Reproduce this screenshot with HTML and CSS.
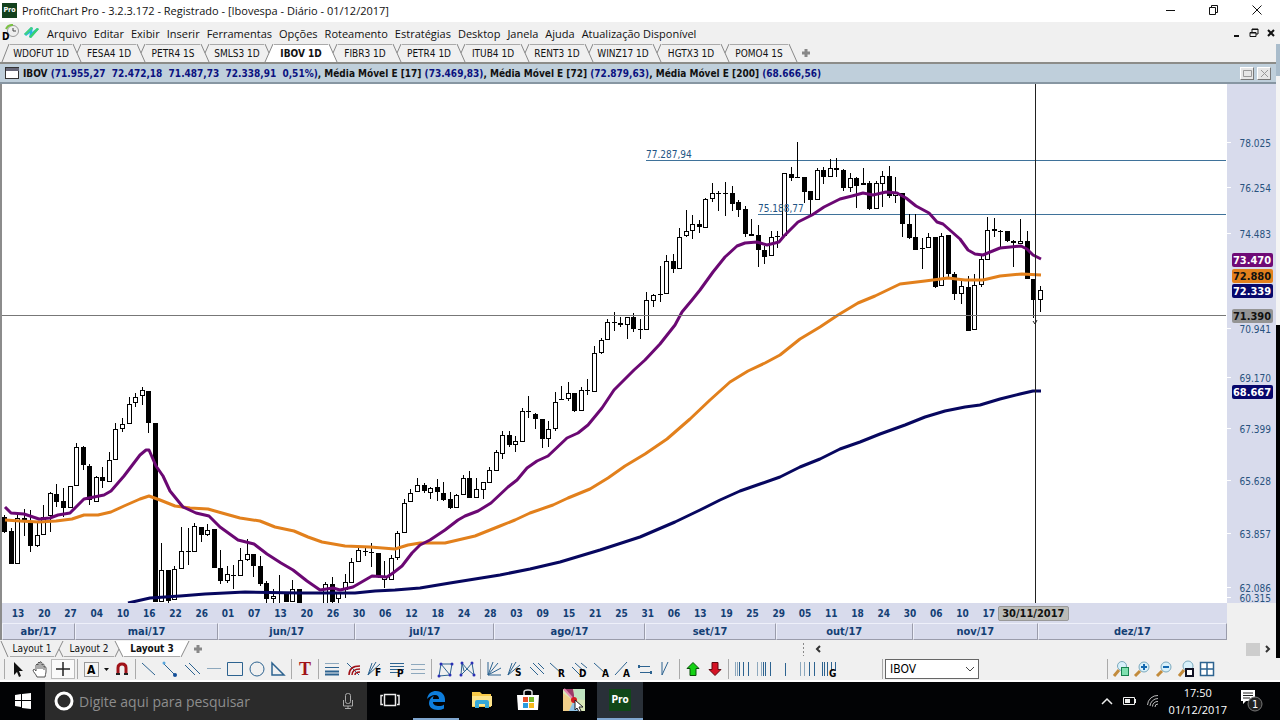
FILE: index.html
```html
<!DOCTYPE html>
<html lang="pt-BR">
<head>
    <meta charset="UTF-8">
    <meta name="viewport" content="width=device-width, initial-scale=1.0">
    <title>ProfitChart Pro</title>
    <link rel="stylesheet" href="styles.css">
</head>
<body>
    <header class="titlebar">
        <span class="app-logo">Pro</span>
        <h1>ProfitChart Pro - 3.2.3.172 - Registrado - [Ibovespa - Diário - 01/12/2017]</h1>
        <div class="window-buttons">
            <button aria-label="Minimizar"><svg width="12" height="12"><path d="M1 6.500h9"/></svg></button>
            <button aria-label="Restaurar"><svg width="12" height="12"><path d="M1.500 3.500h6v7h-6zM3.500 3v-1.500h6v7h-1.500"/></svg></button>
            <button aria-label="Fechar"><svg width="12" height="12"><path d="M1.500 1.500l9 9M10.500 1.500l-9 9"/></svg></button>
        </div>
    </header>

    <main class="workspace">
        <div class="desk">
            <nav class="menubar">
                <svg class="menu-clock" width="18" height="18"><circle cx="11" cy="7" r="5.500" fill="#eee" stroke="#999"/><path d="M4 5a7 7 0 0 1 7-4" fill="none" stroke="#7ac142" stroke-width="2"/><path d="M11 4v3h3" fill="none" stroke="#444"/><text x="0" y="16" class="mark">D</text></svg>
                <svg class="menu-zig" width="17" height="18"><path d="M1 10L8 3l2 1-1 4 5-4 2 1-8 9-2-1 1-4-4 3z" fill="#22b8dc"/><path d="M1 10L8 3l2 1-7 7z" fill="#43d17c"/><path d="M6 13l8-9 2 1-8 9z" fill="#3bd36b"/></svg>
                <a href="#">Arquivo</a><a href="#">Editar</a><a href="#">Exibir</a><a href="#">Inserir</a><a href="#">Ferramentas</a><a href="#">Opções</a><a href="#">Roteamento</a><a href="#">Estratégias</a><a href="#">Desktop</a><a href="#">Janela</a><a href="#">Ajuda</a><a href="#">Atualização Disponível</a>
                <div class="mdi-buttons">
                    <button aria-label="Minimizar gráfico"><svg width="10" height="10"><path d="M2 8h5" stroke-width="2"/></svg></button>
                    <button aria-label="Restaurar gráfico"><svg width="10" height="10"><path d="M1 4.500h6v4h-6zM1 5h6M3 4v-3h6v5h-2M3 1.500h6"/></svg></button>
                    <button aria-label="Fechar gráfico"><svg width="10" height="10"><path d="M2 2l6 6M8 2l-6 6" stroke-width="2"/></svg></button>
                </div>
            </nav>

            <div class="tabs" id="assetTabs">
                <button class="first">WDOFUT 1D</button>
                <button>FESA4 1D</button>
                <button>PETR4 1S</button>
                <button>SMLS3 1D</button>
                <button class="active">IBOV 1D</button>
                <button>FIBR3 1D</button>
                <button>PETR4 1D</button>
                <button>ITUB4 1D</button>
                <button>RENT3 1D</button>
                <button class="wide">WINZ17 1D</button>
                <button class="wide">HGTX3 1D</button>
                <button class="wide">POMO4 1S</button>
                <button class="add" aria-label="Nova aba"><svg width="10" height="10"><path d="M5 1v8M1 5h8"/></svg></button>
            </div>

            <div class="chart-header">
                <svg width="15" height="13"><rect x=".5" y=".5" width="13" height="11" fill="#fff" stroke="#333"/><path d="M1 2.500h13" stroke="#667" stroke-width="3"/></svg>
                <p>IBOV <b>(71.955,27&nbsp; 72.472,18&nbsp; 71.487,73&nbsp; 72.338,91&nbsp; 0,51%)</b>, Média Móvel E [17] <b>(73.469,83)</b>, Média Móvel E [72] <b>(72.879,63)</b>, Média Móvel E [200] <b>(68.666,56)</b></p>
                <button aria-label="Maximizar"><svg width="9" height="9"><path d="M.5 1.500h8v6h-8z"/></svg></button>
                <button aria-label="Fechar"><svg width="9" height="9"><path d="M1 1l7 7M8 1l-7 7"/></svg></button>
            </div>

            <section class="chart">
                <svg class="plot" id="plot" viewBox="2 84 1274 519">
                    <rect x="1227" y="84" width="49" height="519" fill="#d8dbec"/>
                    <g id="ticks"></g>
                    <path class="level" d="M646 160.500H1226M758 214.500H1226"/>
                    <g id="candles"></g>
                    <text class="level-text" x="646" y="158">77.287,94</text>
                    <text class="level-text" x="758" y="212">75.188,77</text>
                    <polyline class="ma200" points="128,603 150,598 180,596 205,594 245,592 300,593 355,593 375,591 395,590 420,588 450,583 500,575 530,569 560,562 600,550 640,537 675,522 700,510 720,500 740,491 760,484 780,477 800,467 820,459 840,449 860,442 880,434 905,425 925,417 945,411 965,407 980,405 1000,399 1020,394 1033,391 1041,391"/>
                    <polyline class="ma72" points="5,520 20,521 39,522 56,521 72,519 84,515 98,515 111,512 124,506 140,499 149,496 160,500 175,506 190,508 208,509 222,513 240,518 260,521 275,527 294,531 308,537 322,542 345,546 370,547 395,549 408,545 420,543 445,543 475,536 500,526 515,520 530,513 553,505 568,498 590,489 608,478 625,466 645,454 667,439 690,419 710,400 730,382 748,371 765,363 780,355 800,339 820,327 838,315 858,303 875,296 900,284 925,281 948,278 965,280 983,280 1000,276 1022,274 1041,275"/>
                    <polyline class="ma17" points="5,507 11,513 24,514 39,519 50,518 58,515 70,513 84,499 104,495 111,491 124,476 140,455 146,450 149,450 156,466 163,476 170,491 183,507 196,513 209,516 220,527 238,540 254,544 267,554 281,563 293,570 307,581 320,590 333,588 340,590 353,587 372,576 387,577 393,573 402,566 412,553 420,545 430,540 445,530 458,520 465,516 478,511 491,503 508,487 517,480 527,468 537,461 548,456 567,438 578,433 588,425 602,408 614,390 634,370 645,360 660,344 675,325 682,312 692,300 700,290 713,272 725,257 737,246 745,243 757,242 767,245 779,242 784,236 798,222 812,215 824,207 840,199 852,196 863,193 873,195 886,192 897,193 906,198 916,206 929,213 937,222 943,224 960,239 968,250 975,254 983,255 1000,248 1021,246 1027,249 1033,255 1041,259"/>
                    <path class="cross" d="M2 315.500H1226"/>
                    <path class="cross-v" d="M1035.500 84V603"/>
                    <g id="prices"></g>
                    <path d="M1033 321l2 3 2-4" fill="none" stroke="#222"/>
                </svg>
            </section>

            <div class="axis">
                <div class="axis-days">
                    <div class="days" id="days"></div>
                    <span class="day-tag">30/11/2017</span>
                    <span class="days-rest"></span>
                </div>
                <div class="months">
                    <span>abr/17</span><span>mai/17</span><span>jun/17</span><span>jul/17</span><span>ago/17</span><span>set/17</span><span>out/17</span><span>nov/17</span><span>dez/17</span>
                </div>
            </div>
        </div>
        <div class="side"></div>
    </main>

    <div class="layouts">
        <div class="tabs flipped" id="layoutTabs">
            <button class="first">Layout 1</button>
            <button>Layout 2</button>
            <button class="active">Layout 3</button>
            <button class="add" aria-label="Novo layout"><svg width="10" height="10"><path d="M5 1v8M1 5h8"/></svg></button>
        </div>
        <div class="scroller">
            <svg width="24" height="14"><path d="M3.500 1v13" stroke="#888" stroke-dasharray="2 2"/><path d="M20 4l-3 3 3 3" fill="none" stroke="#333" stroke-width="2"/></svg>
            <span class="thumb"></span>
            <svg width="16" height="14"><path d="M6 4l3 3-3 3" fill="none" stroke="#333" stroke-width="2"/></svg>
        </div>
    </div>

    <div class="toolbar">
        <div class="group">
            <button aria-label="Cursor"><svg viewBox="0 0 18 18"><path d="M5 2v13l3-3 2 5 2-1-2-5h4z" fill="#111"/></svg></button>
            <button aria-label="Mover"><svg viewBox="0 0 18 18"><path d="M6 17C5 14 2 12 2 10q1-2 3 1V5q1-2 2 0V3q1-2 2 0v-1q1-1 2 1v2q2-2 2 0v2q2-1 2 1v4c0 2-1 3-1 5zM7 4v5M9 3v6M11 4v5M13 6v4" fill="#fff" stroke="#555"/></svg></button>
            <button class="pressed" aria-label="Cruz"><svg viewBox="0 0 18 18"><path d="M9 2v14M2 9h14" stroke="#222" stroke-width="1.500"/></svg></button>
        </div>
        <div class="group">
            <button aria-label="Texto"><svg viewBox="0 0 18 18"><rect x="2.500" y="2.500" width="14" height="14" fill="#f4f4f4" stroke="#999"/><text x="5" y="14" class="mark big">A</text></svg></button>
            <button class="narrow" aria-label="Opções de texto"><svg viewBox="0 0 9 18"><path d="M2 8h5l-2.500 3z" fill="#111"/></svg></button>
            <button aria-label="Ímã"><svg viewBox="0 0 18 18"><path d="M5 15V8q0-4 4-4t4 4v7" fill="none" stroke="#a01218" stroke-width="3"/><path d="M3 14h4M11 14h4" stroke="#222" stroke-width="2"/></svg></button>
        </div>
        <div class="group">
            <button aria-label="Reta"><svg viewBox="0 0 18 18"><path class="b" d="M2 3l13 12"/></svg></button>
            <button aria-label="Segmento"><svg viewBox="0 0 18 18"><path class="b" d="M2 3l12 12"/><circle cx="3" cy="3" r="1.500" fill="#58a6dd"/><circle cx="14" cy="15" r="2" fill="#124e99"/></svg></button>
            <button aria-label="Canal"><svg viewBox="0 0 18 18"><path class="b" d="M2 5l10 10M6 3l11 11"/></svg></button>
            <button aria-label="Linha horizontal"><svg viewBox="0 0 18 18"><path class="b soft" d="M2 8.500h14"/></svg></button>
            <button aria-label="Retângulo"><svg viewBox="0 0 18 18"><path class="b" d="M1.500 2.500h15v13h-15z"/></svg></button>
            <button aria-label="Círculo"><svg viewBox="0 0 18 18"><circle class="b" cx="9" cy="9" r="7"/></svg></button>
            <button aria-label="Triângulo"><svg viewBox="0 0 18 18"><path class="b" d="M3 3v12h12z" stroke-width="1.500"/></svg></button>
        </div>
        <div class="group">
            <button aria-label="Nota"><svg viewBox="0 0 18 18"><text x="3" y="15" class="serif-t">T</text></svg></button>
        </div>
        <div class="group">
            <button aria-label="Retrações"><svg viewBox="0 0 18 18"><path class="b soft" d="M2 3.500h14"/><path class="b" d="M2 7.500h14"/><path class="b" d="M2 11.500h14M2 14.500h14" stroke-width="2"/></svg></button>
            <button aria-label="Arcos"><svg viewBox="0 0 18 18"><path class="b" d="M3 3l12 12"/><path d="M5 15q0-9 11-9M8 15q0-6 8-6M11 15q0-3 5-3" fill="none" stroke="#a01218" stroke-width="1.500"/></svg></button>
            <button aria-label="Leque Fibonacci"><svg viewBox="0 0 18 18"><path class="b" d="M2 15L14 4M2 15L10 2M2 15L6 3"/><text x="9" y="16" class="mark">F</text></svg></button>
            <button aria-label="Projeção"><svg viewBox="0 0 18 18"><path class="b" d="M2 3.500h14M2 6.500h14M2 9.500h14M2 12.500h8"/><text x="9" y="17" class="mark">P</text></svg></button>
            <button aria-label="Extensões"><svg viewBox="0 0 18 18"><path class="b soft" d="M2 4.500h14M2 9.500h14M2 13.500h14"/></svg></button>
        </div>
        <div class="group">
            <button aria-label="Padrão"><svg viewBox="0 0 18 18"><path class="b" d="M3 16L5 4h11l-2 11zM5 4l9 11"/><path class="dots" d="M3 16h0M5 4h0M16 4h0M14 15h0"/></svg></button>
            <button aria-label="Borboleta"><svg viewBox="0 0 18 18"><path class="b" d="M3 15L4 3l5 6 5-6 2 12-7-6zM4 3l2 8"/><path class="dots" d="M3 15h0M4 3h0M14 3h0M16 15h0"/></svg></button>
        </div>
        <div class="group">
            <button aria-label="Leque"><svg viewBox="0 0 18 18"><path class="b" d="M3 2v13h13M3 15L8 2M3 15l10-12M3 15l13-7"/></svg></button>
            <button aria-label="Leque de velocidade"><svg viewBox="0 0 18 18"><path class="b" d="M2 15L14 5M2 15L10 2M2 15L6 3"/><text x="9" y="16" class="mark">S</text></svg></button>
            <button aria-label="Paralelas"><svg viewBox="0 0 18 18"><path class="b" d="M2 7l8 8M5 3l11 11M10 3l6 6"/></svg></button>
            <button aria-label="Regressão"><svg viewBox="0 0 18 18"><path class="b" d="M1 3l11 10"/><text x="9" y="17" class="mark">R</text></svg></button>
            <button aria-label="Desvio"><svg viewBox="0 0 18 18"><path class="b" d="M1 7l8 8M4 3l10 9M10 3l6 5"/><text x="8" y="17" class="mark">D</text></svg></button>
            <button aria-label="Reta A"><svg viewBox="0 0 18 18"><path class="b" d="M1 3l11 10"/><text x="9" y="17" class="mark">A</text></svg></button>
            <button aria-label="Reta B"><svg viewBox="0 0 18 18"><path class="b" d="M1 15L13 2"/><text x="9" y="17" class="mark">A</text></svg></button>
            <button aria-label="Ciclo"><svg viewBox="0 0 18 18"><path class="b" d="M2 6.500h12M4 12.500h12"/><path class="b" d="M3 5v3M15 11v3" stroke-width="2"/></svg></button>
            <button aria-label="Pernada"><svg viewBox="0 0 18 18"><path class="b" d="M5 2v13L11 2"/></svg></button>
        </div>
        <div class="group">
            <button aria-label="Compra"><svg viewBox="0 0 18 18"><path d="M9 2.500l6 6h-3v7H6v-7H3z" fill="#14d214" stroke="#084f08"/></svg></button>
            <button aria-label="Venda"><svg viewBox="0 0 18 18"><path d="M9 15.500l6-6h-3v-7H6v7H3z" fill="#d51224" stroke="#5d0810"/></svg></button>
        </div>
        <div class="group">
            <button aria-label="Ciclos 1"><svg viewBox="0 0 18 18"><path class="b soft" d="M2.500 2v14M4.500 2v14"/><path class="b" d="M6.500 2v14M10.500 2v14M15.500 2v14"/></svg></button>
            <button aria-label="Ciclos 2"><svg viewBox="0 0 18 18"><path class="b soft" d="M2.500 2v14M6.500 2v14"/><path class="b" d="M8.500 2v14M10.500 2v14M15.500 2v14"/></svg></button>
            <button aria-label="Linha vertical"><svg viewBox="0 0 18 18"><path class="b" d="M9.500 3v13"/></svg></button>
            <button aria-label="Ciclos 3"><svg viewBox="0 0 18 18"><path class="b soft" d="M2.500 2v14M6.500 2v14"/><path class="b" d="M11.500 2v14M16.500 2v14"/></svg></button>
            <button aria-label="Ciclos Gann"><svg viewBox="0 0 18 18"><path class="b" d="M2.500 2v14M4.500 2v14M7.500 2v14M11.500 2v9M15.500 2v9"/><text x="9" y="17" class="mark">G</text></svg></button>
        </div>
        <div class="group symbol">
            <select aria-label="Ativo"><option>IBOV</option></select>
            <svg class="chevron" viewBox="0 0 10 18"><path d="M1 7l4 4 4-4" fill="none" stroke="#444"/></svg>
        </div>
        <div class="group zooms">
            <button aria-label="Zoom área"><svg viewBox="0 0 18 18"><circle class="lens" cx="10" cy="6" r="4.500"/><path class="handle" d="M7 10l-5 6"/><rect x="9.500" y="7.500" width="7" height="8" fill="#7fe0b0" stroke="#17814e"/></svg></button>
            <button aria-label="Aumentar zoom"><svg viewBox="0 0 18 18"><circle class="lens" cx="11" cy="7" r="5"/><path class="handle" d="M7 11l-5 5"/><path d="M8 7h6M11 4v6" stroke="#1368b0" stroke-width="2"/></svg></button>
            <button aria-label="Diminuir zoom"><svg viewBox="0 0 18 18"><circle class="lens" cx="11" cy="7" r="5"/><path class="handle" d="M7 11l-5 5"/><path d="M8 7h6" stroke="#1368b0" stroke-width="2"/></svg></button>
            <button aria-label="Zoom original"><svg viewBox="0 0 18 18"><circle class="lens" cx="11" cy="6" r="5"/><path class="handle" d="M7 10l-5 6"/><rect x="9" y="9" width="7" height="7" fill="#fff" stroke="#112" stroke-width="2"/></svg></button>
            <button aria-label="Organizar janelas"><svg viewBox="0 0 18 18"><path d="M2.500 2.500h13v13h-13zM9 2v13M2 9h13" fill="#fff" stroke="#2d6390" stroke-width="1.500"/></svg></button>
        </div>
    </div>

    <footer class="taskbar">
        <button class="start" aria-label="Iniciar"><svg width="16" height="16"><path d="M0 2l6-1v6H0zM7 1l9-1v7H7zM0 8h6v6l-6-1zM7 8h9v8l-9-1z" fill="#fff"/></svg></button>
        <label class="search">
            <svg width="20" height="20"><circle cx="10" cy="10" r="8" fill="none" stroke="#fff" stroke-width="3"/></svg>
            <input type="text" placeholder="Digite aqui para pesquisar">
            <svg width="12" height="18"><rect x="3.500" y="1.500" width="5" height="10" rx="2" fill="none" stroke="#aaa"/><path d="M1.500 8v6h9V8M6 14v3M3 16.500h6" fill="none" stroke="#aaa"/></svg>
        </label>
        <button class="app" aria-label="Visão de tarefas"><svg width="20" height="16"><path d="M4.500 2.500h11v11h-11zM3 3.500H1v9h2M17 3.500h2v9h-2" fill="none" stroke="#eee" stroke-width="1.500"/></svg></button>
        <button class="app edge" aria-label="Edge"><svg width="20" height="20" viewBox="0 0 20 20"><path d="M1 9C2 3 6 1 10 1c6 0 9 4 9 9v2H7c0 3 3 4 6 4 2 0 4-.5 5-1.500v4c-2 1-4 1.500-6 1.500-6 0-9-3-9-7 0-3 2-6 5-7-1 1-1 2-1 3h6c0-2-1-4-4-4-3 0-6 2-8 4z" fill="#0d7ddc"/></svg></button>
        <button class="app" aria-label="Explorador"><svg width="20" height="20"><path d="M0 2h8l2 2h9v13H0z" fill="#f7c948"/><path d="M0 6h20v10H0z" fill="#fde48c"/><path d="M3 18v-6q0-2 2-2h10q2 0 2 2v6h-4v-4H7v4z" fill="#37a9d8"/></svg></button>
        <button class="app" aria-label="Loja"><svg width="22" height="22"><path d="M7 6V3q0-2 4-2t4 2v3" fill="none" stroke="#ddd" stroke-width="1.500"/><path d="M0 6h22l-1 15H1z" fill="#fff"/><path d="M6 8h5v5H6z" fill="#e8502b"/><path d="M12 8h5v5h-5z" fill="#76b82a"/><path d="M6 14h5v5H6z" fill="#2a9be0"/><path d="M12 14h5v5h-5z" fill="#f5b81c"/></svg></button>
        <button class="app" aria-label="Gravador"><svg width="24" height="24"><path d="M1 1h22v22H1z" fill="#d9e8b8"/><path d="M1 1h10l2 12z" fill="#9c3b68"/><path d="M12 1h11v11l-11-1z" fill="#bfe3c0"/><path d="M1 5l11 8-5 10H1z" fill="#f0ce8a"/><path d="M12 12l-5 11h11z" fill="#8fc3e6"/><path d="M2 1l10 11" stroke="#e48ab0" stroke-width="2"/><circle cx="12" cy="12" r="3" fill="#d41a1f"/><path d="M13 12v10l2-2 2 4 2-1-2-4h4z" fill="#fff" stroke="#222"/></svg></button>
        <button class="app running" aria-label="ProfitChart Pro"><span class="pro-tile">Pro</span></button>
        <div class="tray">
            <svg width="14" height="18"><path d="M2 12l5-5 5 5" fill="none" stroke="#eee" stroke-width="1.500"/></svg>
            <svg width="14" height="18"><path d="M.5 5.500h11v7H.5zM12.500 7v4" fill="none" stroke="#eee"/><path d="M2 7h5v4H2z" fill="#eee"/></svg>
            <svg width="14" height="18"><path d="M1.500 13A10 10 0 0 1 12 3.500M4 14A8 8 0 0 1 12 6.500M6.500 14.500A5 5 0 0 1 12 9.500M9 15A3 3 0 0 1 12 12" fill="none" stroke="#bbb"/></svg>
            <time>17:50<br>01/12/2017</time>
            <svg class="notice" width="24" height="26"><path d="M1 2h14v11H6l-3 3v-3H1z" fill="#fff"/><path d="M3 5h10M3 7.500h10M3 10h7" stroke="#222"/><circle cx="15" cy="16" r="7" fill="#222" stroke="#777"/><text x="12" y="20">1</text></svg>
        </div>
    </footer>

    <script src="chart.js"></script>
</body>
</html>
```
FILE: styles.css
```css
:root {
    --face: #f0f0f0;
    --axis: #d8dbec;
    --axis-text: #143f74;
    --header: #bfcfdb;
    --ui: "DejaVu Sans Condensed", "DejaVu Sans", sans-serif;
}

* {
    margin: 0;
    padding: 0;
    box-sizing: border-box;
}

body {
    min-height: 100vh;
    display: flex;
    flex-direction: column;
    overflow: hidden;
    background: var(--face);
    font-family: "Open Sans", "Noto Sans", sans-serif;
    font-size: 12px;
    color: #111;
}

button {
    border: none;
    background: none;
    font: inherit;
    color: inherit;
}

svg {
    display: block;
    flex: none;
}

.titlebar {
    height: 22px;
    display: flex;
    align-items: center;
    background: #fff;
    padding: 0 17px 2px 2px;
}

.app-logo {
    width: 15px;
    height: 15px;
    background: #12401c;
    color: #fff;
    font: bold 7px/15px var(--ui);
    text-align: center;
}

.titlebar h1 {
    margin-left: 5px;
    font-size: 11px;
    font-weight: 400;
}

.window-buttons {
    margin-left: auto;
    display: flex;
    gap: 31px;
}

.window-buttons path,
.mdi-buttons path {
    fill: none;
    stroke: #111;
}

.workspace {
    display: flex;
}

.desk {
    flex: 1;
    min-width: 0;
}

/* strip of the window lying behind */
.side {
    width: 4px;
    background: linear-gradient(var(--face) 22px, #a9bccb 22px 54px, #f4f4f4 54px 303px, #000 303px);
}

.menubar {
    height: 22px;
    display: flex;
    align-items: center;
    padding-left: 2px;
}

.menubar a {
    margin-right: 7px;
    color: #111;
    text-decoration: none;
    font-size: 11px;
}

.menu-zig {
    margin: 0 7px 0 3px;
}

.mdi-buttons {
    margin-left: auto;
    display: flex;
    gap: 7px;
}

.mark {
    font: bold 10px var(--ui);
    fill: #000;
}

.mark.big {
    font-size: 12px;
}

.tabs {
    display: flex;
    height: 18px;
    font: 10px/17px var(--ui);
}

.tabs button {
    width: 54px;
    text-align: center;
    white-space: nowrap;
    border-top: 1px solid #aaa;
}

.tabs button.first {
    width: 62px;
}

.tabs button.wide {
    width: 58px;
}

.tabs .active {
    background: #fff;
    font-weight: bold;
}

.slant {
    width: 10px;
    height: 100%;
    fill: none;
    stroke: #888;
}

.slant .paper {
    fill: #fff;
    stroke: none;
}

.tabs button.add {
    width: 16px;
    border: none;
    display: flex;
    align-items: center;
    justify-content: center;
}

.tabs .add path {
    stroke: #888;
    stroke-width: 3;
}

.chart-header {
    height: 22px;
    display: flex;
    align-items: center;
    gap: 3px;
    padding: 0 5px;
    background: var(--header);
    border-top: 2px solid #8c8c88;
    border-bottom: 2px solid #8796a2;
    font: bold 10px var(--ui);
}

.chart-header p {
    flex: 1;
    white-space: nowrap;
}

.chart-header b {
    color: #0b1280;
}

.chart-header button {
    width: 14px;
    height: 13px;
    display: grid;
    place-items: center;
    background: #e6e6e6;
    border: 1px solid #fff;
    border-right-color: #777;
    border-bottom-color: #777;
}

.chart-header button path {
    fill: none;
    stroke: #999;
}

.chart {
    background: #fff;
    border-left: 2px solid #8c8c8c;
}

.plot {
    width: 100%;
}

.level {
    stroke: #3f729a;
}

.level-text {
    font: 10px var(--ui);
    fill: #235584;
}

.plot polyline {
    fill: none;
    stroke-width: 3;
    stroke-linejoin: round;
}

.plot .ma17 {
    stroke: #6b0873;
}

.plot .ma72 {
    stroke: #e2801c;
}

.plot .ma200 {
    stroke: #07075f;
}

.cross {
    stroke: #777;
}

.cross-v {
    stroke: #222;
}

#candles {
    shape-rendering: crispEdges;
    stroke: #000;
}

.up {
    fill: #fff;
}

.down {
    fill: #000;
}

.price {
    font: 10px var(--ui);
    fill: #28527e;
    text-anchor: end;
}

.price-tag {
    font: bold 11px var(--ui);
    text-anchor: middle;
}

.axis {
    margin-right: 49px;
    background: var(--axis);
    border-left: 2px solid #8c8c8c;
    color: var(--axis-text);
    font: bold 10px var(--ui);
}

.axis-days {
    display: flex;
    align-items: center;
    height: 20px;
    padding-left: 3px;
}

.days {
    flex: 996;
    display: grid;
    grid-template-columns: repeat(38, 1fr);
    text-align: center;
}

.day-tag {
    width: 71px;
    margin-left: -4px;
    text-align: center;
    color: #111;
    background: #bcbcb8;
    border: 1px solid #999;
    border-radius: 2px;
    font-size: 11px;
    line-height: 13px;
}

.days-rest {
    flex: 158;
}

.months {
    display: grid;
    grid-template-columns: 73fr 143fr 137fr 139fr 150fr 131fr 137fr 125fr 189fr;
    text-align: center;
    font-size: 11px;
    line-height: 15px;
}

.months span {
    border: 1px solid #eef0fa;
    border-right-color: #9a9cab;
    border-bottom-color: #9a9cab;
}

.layouts {
    height: 18px;
    display: flex;
    justify-content: space-between;
    align-items: center;
    border-right: 4px solid #000;
}

.tabs.flipped {
    height: 16px;
    line-height: 14px;
}

.tabs.flipped button {
    width: 50px;
    border-top: none;
    border-bottom: 1px solid #aaa;
}

.tabs.flipped button.first {
    width: 44px;
}

.tabs.flipped button.active {
    width: 56px;
}

.tabs.flipped button.add {
    width: 16px;
    border: none;
}

.scroller {
    display: flex;
    align-items: center;
    flex: 0 0 476px;
}

.thumb {
    width: 14px;
    height: 13px;
    margin-left: auto;
    background: #cdcdcd;
}

.toolbar {
    height: 24px;
    display: grid;
    grid-template-columns: 73px 58px 156px 27px 113px 49px 199px 49px 114px 1fr 225px 173px;
    align-items: center;
    padding-left: 4px;
    border-bottom: 2px solid #fff;
}

.group {
    display: flex;
    height: 20px;
    padding: 0 2px;
    border-left: 1px solid #aaa;
}

.group button {
    flex: 1;
    display: grid;
    place-items: center;
}

.group button.narrow {
    flex: 0 0 10px;
}

.group svg {
    height: 18px;
    overflow: visible;
}

.group .pressed {
    background: #fafafa;
    border: 1px solid #bbb;
}

.group .b {
    fill: none;
    stroke: #2d6390;
}

.group .soft {
    stroke: #8da8bd;
}

.dots {
    stroke: #2a2fb5;
    stroke-width: 3;
    stroke-linecap: round;
}

.serif-t {
    font: bold 18px "Liberation Serif", serif;
    fill: #a01218;
}

.symbol {
    grid-column: 11;
    align-items: center;
}

.symbol select {
    appearance: none;
    width: 94px;
    height: 20px;
    border: 1px solid #666;
    background: #fff;
    font: 12px var(--ui);
    padding-left: 4px;
}

.symbol .chevron {
    width: 10px;
    margin-left: -14px;
    pointer-events: none;
}

.zooms {
    width: 113px;
}

.lens {
    fill: #d8f0fa;
    stroke: #7ba9bd;
}

.handle {
    stroke: #c28b3c;
    stroke-width: 3;
}

.taskbar {
    flex: 1;
    min-height: 38px;
    display: flex;
    align-items: stretch;
    background: #020305;
    color: #fff;
}

.taskbar button {
    display: grid;
    place-items: center;
}

.start {
    width: 45px;
}

.search {
    width: 322px;
    display: flex;
    align-items: center;
    gap: 5px;
    padding: 0 13px 0 9px;
    background: #2b2b2b;
}

.search input {
    flex: 1;
    min-width: 0;
    border: none;
    background: none;
    color: #fff;
    font: 14px "Open Sans", sans-serif;
}

.search input::placeholder {
    color: #8d8d8d;
}

.app {
    width: 46px;
    border-bottom: 2px solid transparent;
}

.app.edge,
.app.running {
    border-color: #7fa6cf;
}

.app.running {
    background: #293038;
}

.pro-tile {
    width: 22px;
    height: 22px;
    background: #104718;
    font: bold 10px/22px var(--ui);
}

.tray {
    margin-left: auto;
    display: flex;
    align-items: center;
    gap: 9px;
    padding-right: 16px;
}

.tray time {
    font-size: 11px;
    line-height: 17px;
    text-align: center;
}

.notice {
    margin-left: 4px;
}

.notice text {
    font: 11px var(--ui);
    fill: #fff;
}
```
FILE: chart.js
```javascript
// one row per session: high, body top, body bottom, low, 1 = closed lower
const sessions = [
    [515,517,531,533,1],[528,531,563,563,1],[513,518,563,563,0],[509,518,519,536,1],[510,523,545,552,1],
    [523,535,545,547,0],[505,517,534,534,0],[492,493,515,532,0],[484,494,501,507,1],[488,501,507,517,1],
    [486,486,507,507,0],[443,447,485,485,0],[446,447,464,470,1],[464,466,499,505,1],[476,477,501,501,0],
    [467,477,480,488,1],[452,460,481,481,0],[423,429,459,459,0],[418,424,428,432,0],[397,404,423,423,0],
    [393,397,402,407,0],[387,390,395,405,0],[391,391,422,433,1],[423,423,601,601,1],[543,570,601,601,0],
    [570,570,600,603,1],[566,569,599,599,0],[527,551,568,568,0],[528,551,551,565,1],[523,526,551,551,0],
    [527,527,534,542,1],[524,530,534,536,0],[529,529,567,567,1],[550,568,580,584,1],[566,574,580,583,0],
    [565,575,575,589,1],[548,560,575,575,0],[539,554,559,561,0],[554,554,565,577,1],[556,566,583,586,1],
    [581,583,598,603,1],[589,596,598,603,0],[575,593,593,603,1],[593,593,601,601,1],[580,589,601,601,0],
    [589,589,603,603,1],null,null,null,[582,584,603,603,0],
    [577,584,601,603,1],[593,593,598,603,0],[574,582,589,598,0],[558,562,582,582,0],[548,550,561,561,0],
    [547,551,551,556,1],[543,552,552,567,1],[553,553,575,578,1],[561,577,579,588,0],[555,558,579,579,0],
    [531,533,557,560,0],[499,503,532,532,0],[489,493,501,501,0],[478,485,491,491,0],[483,485,490,493,1],
    [487,488,492,499,0],[479,487,491,501,1],[482,493,499,501,1],[492,499,507,509,1],[494,495,507,507,0],
    [475,478,494,494,0],[471,478,497,497,1],[478,489,497,497,0],[482,482,489,499,0],[467,470,482,482,0],
    [450,452,470,470,0],[431,435,453,459,0],[431,435,444,447,1],[436,441,444,452,0],[408,411,441,441,0],
    [396,411,411,418,1],[413,414,418,429,1],[419,419,438,448,1],[421,429,438,447,0],[392,402,428,431,0],
    [386,399,399,400,1],[382,393,398,401,0],[393,393,410,412,1],[387,390,410,410,0],[379,390,390,395,1],
    [346,353,391,391,0],[338,340,352,354,0],[319,322,339,339,0],[312,322,322,331,1],[317,323,324,327,1],
    [317,317,324,339,0],[313,317,328,332,1],[319,329,329,339,1],[292,300,329,329,0],[294,295,300,307,0],
    [266,294,294,302,1],[255,261,293,293,0],[254,261,268,273,1],[228,237,268,268,0],[210,231,235,237,0],
    [215,224,230,239,0],[220,224,226,233,1],[198,199,227,227,0],[183,193,198,202,0],[191,193,193,211,1],
    [182,193,193,216,1],[186,193,203,211,1],[200,202,209,217,1],[206,209,233,237,1],[219,234,235,236,1],
    [225,235,249,267,1],[246,250,256,264,1],[231,237,255,255,0],[231,236,236,248,1],[173,173,235,235,0],
    [167,174,177,181,1],[142,177,177,177,1],[177,177,191,203,1],[191,191,199,216,1],[168,170,199,199,0],
    [167,170,176,184,1],[159,168,176,176,0],[158,168,169,177,1],[169,170,187,191,1],[173,178,187,192,0],
    [177,178,185,208,1],[168,183,184,185,1],[181,183,208,210,1],[181,183,208,208,0],[171,176,183,207,0],
    [166,176,195,198,1],[177,193,195,203,0],[193,193,223,237,1],[214,224,237,239,1],[214,237,249,249,1],
    [238,248,248,269,1],[233,237,247,247,0],[237,237,286,288,1],[233,236,285,285,0],[235,235,273,277,1],
    [272,274,293,300,1],[280,286,293,304,0],[276,287,330,330,1],[274,285,329,329,0],[255,259,284,287,0],
    [217,230,259,259,0],[218,229,230,237,1],[230,231,231,248,1],[231,231,240,242,1],[240,241,242,267,1],
    [219,241,243,243,0],[231,241,278,278,1],[279,279,299,318,1],[286,290,299,312,0]
];

let html = '';
sessions.forEach((s, i) => {
    if (!s) return;
    const [high, top, bottom, low, down] = s;
    const x = Math.round(4 + i * 6.555) + 0.5;
    html += `<path d="M${x} ${high}V${low}"/>`;
    if (top === bottom) {
        html += `<path d="M${x - 2.5} ${top + 0.5}h5"/>`;
    } else {
        html += `<rect class="${down ? 'down' : 'up'}" x="${x - 2}" y="${top + 0.5}" width="4" height="${bottom - top}"/>`;
    }
});
document.getElementById('candles').innerHTML = html;

// price scale
const prices = [['78.025', 143], ['76.254', 188], ['74.483', 234], ['70.941', 329], ['69.170', 378],
    ['67.399', 429], ['65.628', 481], ['63.857', 534], ['62.086', 588], ['60.315', 598]];
const tags = [['73.470', 260, '#6f0a76', '#fff'], ['72.880', 276, '#e2801c', '#111'], ['72.339', 291, '#07076b', '#fff'],
    ['71.390', 316, '#949494', '#111'], ['68.667', 392, '#07076b', '#fff']];

document.getElementById('ticks').innerHTML = prices
    .map(([, y]) => `<path d="M1227 ${y - 1}.5h4" stroke="#fff"/>`).join('');
document.getElementById('prices').innerHTML =
    prices.map(([text, y]) => `<text class="price" x="1271" y="${y + 4}">${text}</text>`).join('') +
    tags.map(([text, y, bg, fg]) =>
        `<rect x="1232" y="${y - 7}" width="41" height="14" rx="2" fill="${bg}"/>` +
        `<text class="price-tag" x="1252" y="${y + 4}" fill="${fg}">${text}</text>`).join('');

// session dates under the chart
const days = '13 20 27 04 10 16 22 26 01 07 13 20 26 30 06 12 18 24 28 03 09 15 21 25 31 06 13 19 25 29 05 11 18 24 30 06 10 17';
document.getElementById('days').innerHTML = days.split(' ').map(d => `<span>${d}</span>`).join('');

// slanted edges between tabs; the active tab lies in front of its neighbours
function addSlants(id, flipped) {
    const tabs = [...document.getElementById(id).querySelectorAll('button:not(.add)')];
    const isActive = tab => Boolean(tab && tab.classList.contains('active'));
    const slant = (prev, next) => {
        let d, paper = '';
        if (!flipped) {
            if (!prev) d = 'M9 0L2 18';
            else if (!next) d = 'M1 0L9 18';
            else d = isActive(next) ? 'M9 0L1 18M1 0L5 9' : 'M1 0L9 18M9 0L5 9';
            if (isActive(next)) paper = 'M10 0H9L1 18H10z';
            if (isActive(prev)) paper = 'M0 0H1L9 18H0z';
        } else {
            if (!prev) d = 'M1 0L8 16';
            else if (!next) d = 'M9 0L1 16';
            else d = isActive(next) ? 'M1 0L9 16M1 16L5 8' : 'M9 0L1 16M9 16L5 8';
            if (isActive(next)) paper = 'M1 0L9 16H10V0z';
            if (isActive(prev)) paper = 'M9 0L1 16H0V0z';
        }
        return `<svg class="slant"><path class="paper" d="${paper}"/><path d="${d}"/></svg>`;
    };
    tabs.forEach((tab, i) => tab.insertAdjacentHTML('beforebegin', slant(tabs[i - 1], tab)));
    const last = tabs[tabs.length - 1];
    last.insertAdjacentHTML('afterend', slant(last, null));
}
addSlants('assetTabs', false);
addSlants('layoutTabs', true);
```
